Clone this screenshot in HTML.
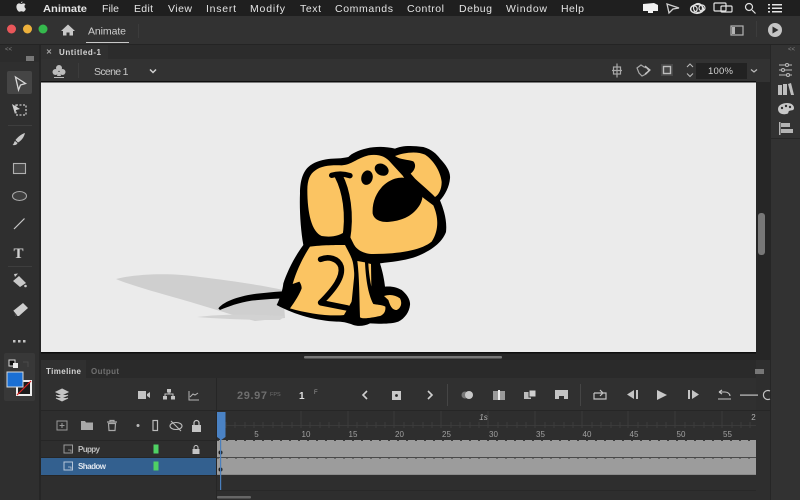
<!DOCTYPE html>
<html><head><meta charset="utf-8"><title>Animate</title>
<style>
html,body{margin:0;padding:0;background:#2d2d2d;width:800px;height:500px;overflow:hidden}
svg{display:block}
#root{filter:blur(.35px)}
text{font-family:"Liberation Sans",sans-serif}
</style></head><body>
<svg id="root" width="800" height="500" viewBox="0 0 800 500" xmlns="http://www.w3.org/2000/svg">
<rect width="800" height="500" fill="#2d2d2d"/>
<!-- menu bar -->
<rect width="800" height="16" fill="#1f1f1f"/>
<g fill="#e4e4e4" font-size="10.5">
<path d="M21 3.2c.8-.1 1.500-.7 1.500-1.700-.9.100-1.600.8-1.500 1.700zM24.500 6.200c0-1 .7-1.500 1-1.800-.6-.8-1.400-1-1.900-1-1 0-1.500.6-2.200.6s-1.300-.6-2.200-.6c-1.500 0-2.800 1.300-2.800 3.300 0 2.300 1.700 5 3 5 .7 0 1.100-.5 2-.5s1.300.5 2 .5c1 0 2.100-1.600 2.500-3-.9-.4-1.400-1.400-1.400-2.500z" fill="#e0e0e0"/>
<text x="43" y="12" font-weight="bold" textLength="44" lengthAdjust="spacingAndGlyphs">Animate</text>
<text x="102" y="12" textLength="17">File</text>
<text x="134" y="12" textLength="19">Edit</text>
<text x="168" y="12" textLength="24">View</text>
<text x="206" y="12" textLength="30">Insert</text>
<text x="250" y="12" textLength="35">Modify</text>
<text x="300" y="12" textLength="21">Text</text>
<text x="335" y="12" textLength="58">Commands</text>
<text x="407" y="12" textLength="37">Control</text>
<text x="459" y="12" textLength="33">Debug</text>
<text x="506" y="12" textLength="41">Window</text>
<text x="561" y="12" textLength="23">Help</text>
</g>
<!-- menu extras -->
<path d="M643 4l11-1 4 2v6h-5v2h-5v-2h-5z" fill="#f2f2f2"/>
<path d="M667 4l12 4-6 1-4 4z" fill="none" stroke="#cfcfcf" stroke-width="1.300"/>
<g fill="none" stroke="#e2e2e2" stroke-width="1.200"><circle cx="694" cy="9" r="3.200"/><circle cx="698" cy="8" r="4.500"/><circle cx="702" cy="8" r="3"/><ellipse cx="697" cy="9" rx="6.500" ry="4.500"/>
<rect x="714" y="3" width="12" height="8" rx="1"/><rect x="721" y="6" width="11" height="6" rx="1"/>
<circle cx="749" cy="7" r="3.500"/><path d="M752 10l3.500 3.500"/></g>
<g fill="#e6e6e6"><rect x="768" y="4" width="2" height="1.500"/><rect x="772" y="4" width="10" height="1.500"/><rect x="768" y="7.500" width="2" height="1.500"/><rect x="772" y="7.500" width="10" height="1.500"/><rect x="768" y="11" width="2" height="1.500"/><rect x="772" y="11" width="10" height="1.500"/></g>

<!-- title bar -->
<rect y="16" width="800" height="28" fill="#323232"/>
<rect y="44" width="800" height="1" fill="#242424"/>
<circle cx="11.500" cy="29" r="4.500" fill="#e9575a"/>
<circle cx="27.500" cy="29" r="4.500" fill="#edb13c"/>
<circle cx="43" cy="29" r="4.500" fill="#35b94d"/>
<path d="M61 31l7-6.500 7 6.500h-2v4.500h-3.500v-3h-3v3H63V31z" fill="#c8c8c8"/>
<text x="88" y="34.500" font-size="10.500" fill="#d0d0d0" textLength="38">Animate</text>
<rect x="86" y="42" width="43" height="1" fill="#c8c8c8"/>
<rect x="138" y="24" width="1" height="14" fill="#3c3c3c"/>
<rect x="731" y="26" width="12" height="9" fill="none" stroke="#b4b4b4" stroke-width="1.200"/>
<rect x="732" y="27" width="3" height="7" fill="#b4b4b4"/>
<rect x="756" y="21" width="1" height="16" fill="#3c3c3c"/>
<circle cx="775" cy="30" r="7" fill="#c4c4c4"/>
<path d="M772.500 26.500l6 3.500-6 3.500z" fill="#2d2d2d"/>

<!-- doc tab row -->
<rect x="41" y="45" width="729" height="14" fill="#2c2c2c"/>
<rect x="41" y="45" width="67" height="14" fill="#303030"/>
<path d="M47 49.500l4 4m0-4l-4 4" stroke="#a8a8a8" stroke-width="1"/>
<text x="59" y="55" font-size="8" font-weight="bold" fill="#d4d4d4" textLength="42">Untitled-1</text>
<!-- scene bar -->
<rect x="41" y="59" width="729" height="23" fill="#323232"/>
<g fill="#bcbcbc"><circle cx="59" cy="68" r="3"/><circle cx="55.500" cy="72" r="3"/><circle cx="62.500" cy="72" r="3"/><path d="M58 72h2l1 4h-4z"/><rect x="54" y="77" width="10" height="1"/></g>
<rect x="78" y="63" width="1" height="15" fill="#3c3c3c"/>
<text x="94" y="75" font-size="10.500" fill="#c8c8c8" textLength="34.500">Scene 1</text>
<path d="M150 69.500l3 3 3-3" fill="none" stroke="#d0d0d0" stroke-width="1.500"/>
<g fill="none" stroke="#a8a8a8" stroke-width="1.200"><rect x="613.500" y="67" width="7" height="7"/><path d="M617 63.500v14M612 70.500h10"/>
<path d="M637 68l4-3 3 2 3 1 2 3-3 3-4 2-3-3z"/></g>
<path d="M645 66l5 4-5 4" fill="none" stroke="#c4c4c4" stroke-width="1.200"/>
<rect x="661" y="64" width="12" height="12" fill="#474747"/>
<rect x="663.500" y="66.500" width="7" height="7" fill="none" stroke="#bdbdbd" stroke-width="1.400"/>
<path d="M687 67l3-3 3 3M687 73.500l3 3 3-3" fill="none" stroke="#bcbcbc" stroke-width="1"/>
<rect x="696" y="63" width="51" height="16" fill="#222"/>
<text x="708" y="74" font-size="9.500" fill="#d4d4d4" textLength="25">100%</text>
<path d="M751 69.500l3 2.500 3-2.500" fill="none" stroke="#bcbcbc" stroke-width="1.200"/>

<!-- left toolbar -->
<rect x="0" y="45" width="40" height="455" fill="#2f2f2f"/>
<rect x="0" y="45" width="40" height="17" fill="#2c2c2c"/>
<rect x="39" y="45" width="2" height="455" fill="#262626"/>
<text x="5" y="51" font-size="6" fill="#888">&lt;&lt;</text>
<rect x="26" y="56" width="8" height="5" fill="#777"/>
<rect x="7" y="71" width="25" height="23" rx="2" fill="#454545"/>
<path d="M15.500 77l10 6.500-5 1.500-2 5z" fill="none" stroke="#d8d8d8" stroke-width="1.300"/>
<rect x="16" y="105" width="10" height="10" fill="none" stroke="#c8c8c8" stroke-width="1.300" stroke-dasharray="2 1.500"/>
<path d="M12 104l8 5-4 1-1 4z" fill="#d0d0d0"/>
<rect x="8" y="125" width="24" height="1" fill="#3e3e3e"/>
<path d="M25 133c-4 1-8 5-9.500 7l2.500 2.500c3-1.500 6-5 7-9.500zM15 141c-1 1-1 3-2.500 4 2 .5 4.500 0 5-2z" fill="#c8c8c8"/>
<rect x="13.500" y="163.500" width="12" height="10" fill="#464646" stroke="#b0b0b0" stroke-width="1.100"/>
<ellipse cx="19.500" cy="196" rx="7" ry="4.500" fill="#3e3e3e" stroke="#a8a8a8" stroke-width="1.100"/>
<path d="M14 229l10.500-10.500" stroke="#c8c8c8" stroke-width="1.200"/>
<text x="13.500" y="258" font-size="15" font-weight="bold" fill="#cfcfcf" style="font-family:'Liberation Serif',serif">T</text>
<rect x="8" y="266" width="24" height="1" fill="#3e3e3e"/>
<path d="M13 281l6-5 7 7-6 4zM15 277l-1-3 4-.5" fill="#c8c8c8"/>
<circle cx="25.500" cy="286" r="1.300" fill="#c8c8c8"/>
<path d="M13 311l10-8 5 5-9 8h-3z" fill="#cfcfcf"/>
<path d="M13 311l4 5" stroke="#2f2f2f" stroke-width="1"/>
<g fill="#c4c4c4"><rect x="13" y="340" width="2.500" height="2.500"/><rect x="18" y="340" width="2.500" height="2.500"/><rect x="23" y="340" width="2.500" height="2.500"/></g>
<rect x="4" y="353" width="31" height="48" rx="2" fill="#383838"/>
<rect x="9" y="360" width="6" height="6" fill="#111" stroke="#ddd"/>
<rect x="13" y="363" width="5" height="5" fill="#eee"/>
<path d="M23 362h5v5" fill="none" stroke="#4a4a4a"/>
<rect x="17" y="381" width="14" height="14" fill="#1c1c1c" stroke="#eee" stroke-width="2"/>
<path d="M17 395l14-14" stroke="#d22" stroke-width="1.200"/>
<rect x="7" y="372" width="16" height="15" fill="#1a6fd4" stroke="#d8d8d8" stroke-width="1"/>

<!-- stage -->
<rect x="41" y="82" width="729" height="278" fill="#262626"/>
<rect x="41" y="82" width="715" height="270.500" fill="#ebebeb"/>
<rect x="41" y="81" width="715" height="1.500" fill="#0e0e0e"/>
<rect x="41" y="352" width="715" height="1.500" fill="#0e0e0e"/>
<rect x="304" y="356" width="198" height="2.500" rx="1" fill="#777"/>
<rect x="758" y="213" width="7" height="42" rx="3" fill="#777"/>

<!-- shadow -->
<path d="M116 279C140 273 175 273 200 277C225 280 262 285 283 290L285 318L255 321C235 316 205 306 180 299C155 292 130 285 116 279Z" fill="#cfcfcf"/>
<path d="M197 317C220 314 250 314 285 316L280 320C250 320 220 319 197 317Z" fill="#d2d2d2"/>

<!-- dog -->
<svg x="200" y="130" width="270" height="210" viewBox="0 0 810 630">
<path d="M55 535C75 510 130 495 180 490C210 487 240 484 270 483L270 505C230 505 190 508 155 512C115 518 85 530 60 540Z" fill="#000"/>
<!-- outer silhouette -->
<path d="M300 190C300 150 310 125 325 111C340 97 360 91 385 87C405 85 425 86 445 81C455 70 475 61 500 55C530 48 560 50 585 56C600 48 630 45 670 51C695 58 710 72 720 86C738 105 752 125 750 145C748 170 735 195 720 211C730 235 742 270 738 306C725 340 690 365 640 383C610 392 575 396 540 400C548 425 553 450 555 470C575 468 590 472 605 480C620 492 632 510 630 525C628 545 615 565 595 575C575 582 545 582 510 580C495 588 475 590 460 585C440 577 425 575 410 575C350 572 285 555 230 525C240 505 248 480 250 460C260 430 280 385 310 345C302 300 298 240 300 190Z" fill="#000"/>
<!-- head + left ear yellow -->
<path d="M322 180C322 150 330 132 345 122C365 105 400 105 425 106C455 104 470 85 505 76C540 71 560 81 575 101L608 137L630 170L672 205L700 226C715 260 718 300 695 335C665 360 600 372 520 372C490 372 468 358 460 340L440 300C420 320 390 322 365 318C335 305 322 250 322 180Z" fill="#fbc462"/>
<!-- right ear -->
<path d="M585 78C610 68 650 62 675 74C700 90 722 125 725 156C725 180 715 195 705 201C690 185 665 165 645 146L632 131C645 120 650 105 640 94C625 88 600 90 585 78Z" fill="#fbc462"/>
<!-- ear curl and divider -->
<path d="M395 136C415 130 435 132 450 137" fill="none" stroke="#000" stroke-width="16" stroke-linecap="round"/>
<path d="M416 138C438 180 452 250 438 330" fill="none" stroke="#000" stroke-width="24" stroke-linecap="round"/>
<!-- mouth -->
<path d="M518 251C515 206 540 161 585 146C620 136 645 151 662 181C680 206 650 251 610 266C570 281 525 281 518 251Z" fill="#000"/>
<!-- eyes -->
<ellipse cx="501" cy="143" rx="17" ry="22" transform="rotate(15 501 143)" fill="#000"/>
<ellipse cx="545" cy="119" rx="22" ry="17" transform="rotate(30 545 119)" fill="#000"/>
<!-- body -->
<path d="M330 350C365 345 410 345 435 345C445 365 458 385 460 405C465 440 465 480 455 515L432 555C390 560 320 550 270 535C285 515 300 490 305 475C305 465 300 458 298 455L278 462C290 420 310 380 330 350Z" fill="#fbc462"/>
<path d="M362 388C385 378 415 385 423 410C430 440 405 475 362 518L442 534" fill="none" stroke="#000" stroke-width="17" stroke-linecap="round" stroke-linejoin="round"/>
<path d="M455 515L468 385L480 385L482 565L440 570Z" fill="#000"/>
<!-- front leg -->
<path d="M472 393L495 397C497 440 503 490 520 522C535 525 550 525 556 530C558 545 550 555 540 558C515 563 490 568 480 562C478 500 478 440 472 393Z" fill="#fbc462"/>
<path d="M505 400L513 402L514 470C510 450 506 425 505 400Z" fill="#fbc462"/>
<!-- paw -->
<path d="M552 498C570 492 585 495 600 505C608 520 602 535 590 540C575 540 570 525 565 510Z" fill="#fbc462"/>
</svg>

<!-- right panel -->
<rect x="770" y="45" width="30" height="455" fill="#323232"/>
<rect x="770" y="45" width="1" height="455" fill="#262626"/>
<rect x="770" y="138" width="30" height="1" fill="#272727"/>
<text x="788" y="51" font-size="6" fill="#888">&lt;&lt;</text>
<g stroke="#b8b8b8" stroke-width="1.100" fill="#323232"><path d="M779 65h13M779 70h13M779 75h13"/><circle cx="787" cy="65" r="1.500"/><circle cx="783" cy="70" r="1.500"/><circle cx="788" cy="75" r="1.500"/></g>
<g fill="#bdbdbd"><rect x="778" y="85" width="4" height="10"/><rect x="783" y="84" width="4" height="11"/><path d="M788 84l3-1 3 12h-3z"/></g>
<path d="M778 109c0-4 5-6 9-6s7 2 7 5-3 2-5 3c-1 1 0 3-3 3-4 1-8-1-8-5z" fill="#c8c8c8"/>
<g fill="#323232"><circle cx="782" cy="108" r="1.200"/><circle cx="786" cy="106" r="1.200"/><circle cx="790" cy="107" r="1.200"/></g>
<g fill="#b4b4b4"><rect x="779" y="122" width="1.500" height="13"/><rect x="781" y="123" width="9" height="4"/><rect x="781" y="129" width="12" height="4"/></g>

<!-- timeline -->
<rect x="41" y="360" width="729" height="140" fill="#2e2e2e"/>
<rect x="41" y="360" width="715" height="18" fill="#2a2a2a"/>
<rect x="41" y="360" width="45" height="18" fill="#303030"/>
<text x="46" y="374" font-size="8" font-weight="bold" fill="#d4d4d4" textLength="35">Timeline</text>
<text x="91" y="374" font-size="8" font-weight="bold" fill="#707070" textLength="28">Output</text>
<rect x="755" y="369" width="9" height="5" fill="#777"/>
<rect x="41" y="378" width="715" height="32" fill="#303030"/>
<rect x="41" y="410" width="729" height="1" fill="#262626"/>
<rect x="41" y="440" width="175" height="1" fill="#262626"/>
<rect x="216" y="378" width="1" height="122" fill="#262626"/>
<path d="M62 389l6 3-6 3-6-3zM56 395l6 3 6-3M56 398l6 3 6-3" fill="#c4c4c4" stroke="#c4c4c4" stroke-width="1"/>
<rect x="138" y="391" width="8" height="8" fill="#c4c4c4"/><path d="M147 394l3-2v6l-3-2z" fill="#c4c4c4"/>
<g fill="#c4c4c4"><rect x="167" y="389" width="4" height="3.500"/><rect x="163" y="396" width="4" height="3.500"/><rect x="171" y="396" width="4" height="3.500"/></g>
<path d="M169 392v2M165 396v-2h8v2" fill="none" stroke="#c4c4c4"/>
<path d="M189 391v9h10M190 397l3-3 2 1 3-2" fill="none" stroke="#b4b4b4" stroke-width="1"/>
<text x="237" y="399" font-size="11" font-weight="bold" fill="#6e6e6e" textLength="30">29.97</text>
<text x="270" y="396" font-size="5.500" fill="#6e6e6e">FPS</text>
<text x="299" y="399" font-size="10" font-weight="bold" fill="#e0e0e0">1</text>
<text x="314" y="394" font-size="6" fill="#9a9a9a">F</text>
<path d="M367 391l-4 4 4 4M428 391l4 4-4 4" fill="none" stroke="#cfcfcf" stroke-width="1.600"/>
<rect x="392" y="391" width="9" height="9" fill="#c8c8c8"/><circle cx="396.500" cy="395.500" r="1.400" fill="#222"/>
<rect x="447" y="384" width="1" height="22" fill="#454545"/>
<circle cx="465" cy="395" r="3.500" fill="#777"/><circle cx="469" cy="395" r="4" fill="#c8c8c8"/>
<rect x="493" y="391" width="12" height="9" fill="#9a9a9a"/><rect x="498" y="390" width="2" height="10" fill="#eee"/>
<rect x="524" y="392" width="7" height="7" fill="#bcbcbc"/><rect x="529" y="390" width="7" height="7" fill="#d0d0d0" stroke="#303030"/>
<path d="M555 390h13v9h-4v-3h-5v3h-4z" fill="#c4c4c4"/>
<rect x="580" y="384" width="1" height="22" fill="#454545"/>
<path d="M594 393v6h12v-6h-3M594 393h8M600 390l3 3-3 3" fill="none" stroke="#c4c4c4" stroke-width="1.200"/>
<path d="M634 390v9l-7-4.500zM636 390h2v9h-2z" fill="#c4c4c4"/>
<path d="M657 390l10 5-10 5z" fill="#c8c8c8"/>
<path d="M688 390h2v9h-2zM692 390l7 4.500-7 4.500z" fill="#c4c4c4"/>
<path d="M719 392l3-2M719 392l3 2M719 392h6c3 0 5 2 5 4M718 399h13" fill="none" stroke="#c4c4c4" stroke-width="1.100"/>
<rect x="740" y="394.500" width="18" height="1.200" fill="#c4c4c4"/>
<path d="M770 391a4.500 4.500 0 1 0 0 8" fill="none" stroke="#c4c4c4" stroke-width="1.200"/>

<!-- layer header icons -->
<rect x="57" y="421" width="10" height="9" fill="none" stroke="#9a9a9a"/><path d="M62 423v5M59.500 425.500h5" stroke="#9a9a9a"/>
<path d="M81 421h4l1 1.500h7v7.500H81z" fill="#a8a8a8"/>
<path d="M107 422h10M110 422v-1.500h4V422M108.500 423.500h7l-.5 7h-6z" fill="none" stroke="#a8a8a8" stroke-width="1.200"/>
<circle cx="138" cy="425.500" r="1.500" fill="#bbb"/>
<rect x="153" y="420.500" width="4.500" height="10" fill="none" stroke="#bbb" stroke-width="1.200"/>
<ellipse cx="176" cy="426" rx="6" ry="3.500" fill="none" stroke="#bbb" stroke-width="1.100"/><path d="M171 421l10 10" stroke="#bbb" stroke-width="1.100"/>
<rect x="192" y="425" width="9" height="7" fill="#c4c4c4"/><path d="M194 425v-2a2.500 2.500 0 0 1 5 0v2" fill="none" stroke="#c4c4c4" stroke-width="1.200"/>

<!-- layers -->
<rect x="41" y="458" width="175" height="17" fill="#33608f"/>
<rect x="41" y="457" width="175" height="1" fill="#262626"/>
<rect x="41" y="475" width="175" height="1" fill="#262626"/>
<rect x="64" y="445" width="8.500" height="8" fill="none" stroke="#9a9a9a"/><path d="M68 450h3v2" fill="none" stroke="#9a9a9a" stroke-width=".8"/>
<text x="78" y="452" font-size="8" font-weight="bold" fill="#bcbcbc" textLength="22">Puppy</text>
<rect x="64" y="462" width="8.500" height="8" fill="none" stroke="#b6c6d8"/><path d="M68 467h3v2" fill="none" stroke="#b6c6d8" stroke-width=".8"/>
<text x="78" y="469" font-size="8" font-weight="bold" fill="#e0e6ee" textLength="28">Shadow</text>
<rect x="153.500" y="444.500" width="5" height="9" fill="#4fd164"/>
<rect x="153.500" y="461.500" width="5" height="9" fill="#4fd164"/>
<rect x="192.500" y="449" width="7" height="5" fill="#c4c4c4"/><path d="M194 449v-1.500a2 2 0 0 1 4 0V449" fill="none" stroke="#c4c4c4"/>

<!-- ruler -->
<g stroke="#3a3a3a"><path d="M217 425.500H756M301 411v14M348 411v14M394 411v14M441 411v14M488 411v14M535 411v14M582 411v14M628 411v14M675 411v14M722 411v14" fill="none"/></g>
<path d="M226 422V428M235 422V428M245 422V428M254 422V428M263 422V428M273 422V428M282 422V428M292 422V428M301 422V428M310 422V428M320 422V428M329 422V428M339 422V428M348 422V428M357 422V428M367 422V428M376 422V428M385 422V428M394 422V428M404 422V428M413 422V428M423 422V428M432 422V428M441 422V428M451 422V428M460 422V428M470 422V428M479 422V428M488 422V428M498 422V428M507 422V428M517 422V428M526 422V428M535 422V428M545 422V428M554 422V428M564 422V428M573 422V428M582 422V428M592 422V428M601 422V428M611 422V428M620 422V428M628 422V428M638 422V428M647 422V428M657 422V428M666 422V428M675 422V428M685 422V428M694 422V428M704 422V428M713 422V428M722 422V428M732 422V428M741 422V428M750 422V428" stroke="#3c3c3c" stroke-width="1"/>
<g font-size="8" fill="#a0a0a0" text-anchor="middle">
<text x="256.500" y="437">5</text><text x="306" y="437">10</text><text x="353" y="437">15</text><text x="399.500" y="437">20</text><text x="446.500" y="437">25</text><text x="493.500" y="437">30</text><text x="540.500" y="437">35</text><text x="587" y="437">40</text><text x="634" y="437">45</text><text x="681" y="437">50</text><text x="727.500" y="437">55</text>
<text x="483.500" y="420" font-style="italic" fill="#b0b0b0">1s</text><text x="753.500" y="420" fill="#b0b0b0">2</text>
</g>

<!-- frames -->
<rect x="217" y="440" width="539" height="17.500" fill="#9c9c9c"/>
<rect x="217" y="458" width="539" height="16.500" fill="#9c9c9c"/>
<path d="M217 440.500H756M217 458H756" stroke="#3e3e3e" stroke-width="1" stroke-dasharray="2 7"/>
<rect x="217" y="457" width="539" height="1" fill="#4a4a4a"/>
<rect x="217" y="474" width="539" height="1" fill="#8a8a8a"/>
<circle cx="220.500" cy="452.500" r="2" fill="#1e1e1e"/>
<circle cx="220.500" cy="469.500" r="2" fill="#1e1e1e"/>
<rect x="220" y="438" width="1.200" height="52" fill="#4a7fbd"/>
<path d="M217 412h8.500v25l-4.250 3-4.250-3z" fill="#4a82c4"/>
<rect x="217" y="490" width="539" height="1" fill="#282828"/>
<rect x="217" y="496" width="34" height="2.500" rx="1" fill="#666"/>
</svg>
</body></html>
